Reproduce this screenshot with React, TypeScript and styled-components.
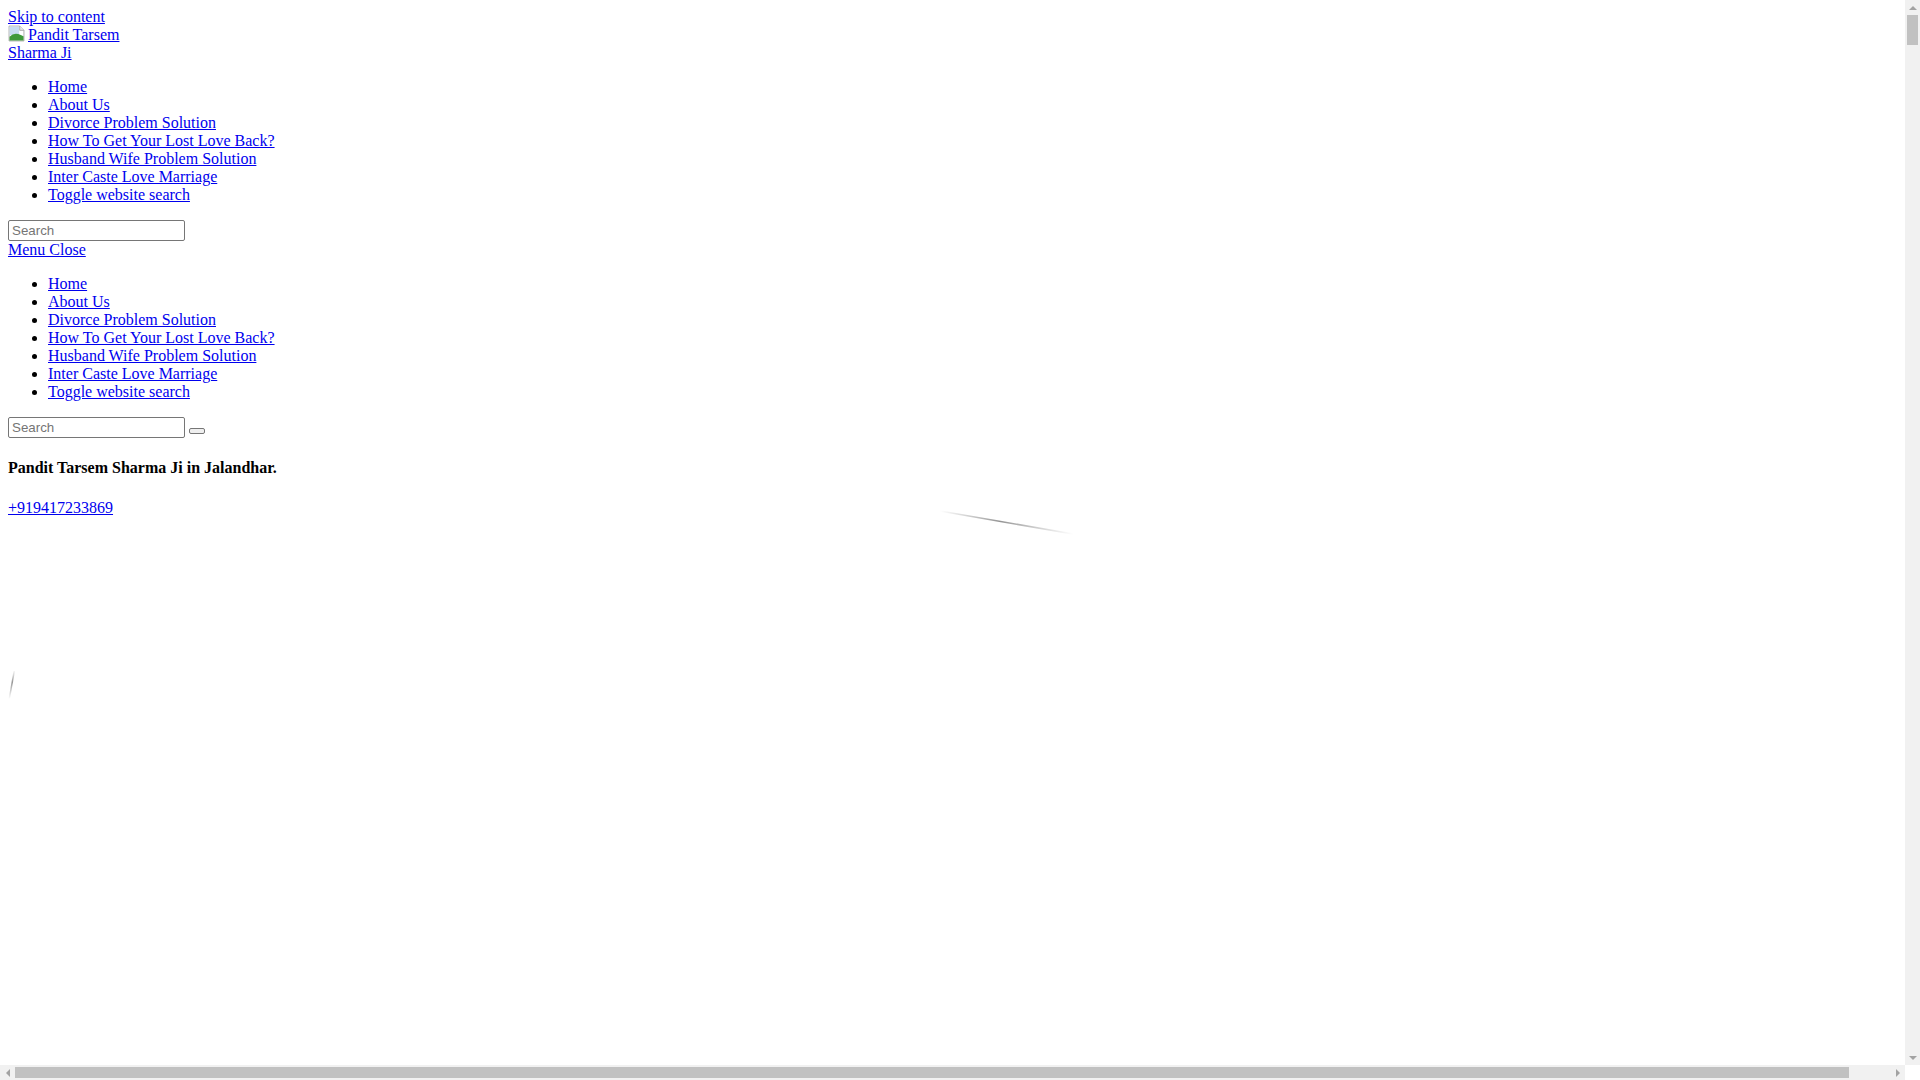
import React from "react";
import styled, { createGlobalStyle } from "styled-components";

const GlobalStyle = createGlobalStyle`
  html, body {
    overflow: hidden;
  }
  body {
    margin: 8px;
    font-family: "Liberation Serif", "Times New Roman", serif;
    font-size: 16px;
    color: #000;
    background: #fff;
  }
  a {
    color: #0000ee;
  }
`;

const LogoLink = styled.a`
  display: inline-block;
  width: 112px;
`;

const BrokenIcon = styled.svg`
  width: 17px;
  height: 17px;
  margin: -4px 3px 0 0;
  vertical-align: -2px;
`;

const NavList = styled.ul`
  margin: 16px 0;
  padding-left: 40px;
  list-style: disc;
`;

const SearchForm = styled.form`
  margin: 0;
`;

const SearchInput = styled.input`
  box-sizing: border-box;
  width: 177px;
  height: 21px;
  padding: 1px 3px;
  border: 1px solid #767676;
  border-radius: 2px;
  font-family: "Liberation Sans", Arial, sans-serif;
  font-size: 13.33px;
  &::placeholder {
    color: #757575;
  }
`;

const SearchButton = styled.button`
  box-sizing: border-box;
  width: 16px;
  height: 6px;
  margin-left: 4px;
  padding: 0;
  border: 1px solid #767676;
  border-radius: 2px;
  background: #efefef;
  vertical-align: -1px;
`;

const SiteTitle = styled.h4`
  font-size: 16px;
  font-weight: bold;
  margin: 21px 0 22px;
`;

const Decor = styled.svg`
  display: block;
  width: 1880px;
  height: 540px;
  overflow: visible;
`;

// fake browser scrollbars, drawn over the page
const VScroll = styled.div`
  position: fixed;
  top: 0;
  right: 0;
  width: 15px;
  height: 1065px;
  background: #f1f1f1;
  display: flex;
  flex-direction: column;
  align-items: center;
`;

const HScroll = styled.div`
  position: fixed;
  left: 0;
  bottom: 0;
  width: 1905px;
  height: 15px;
  background: #f1f1f1;
  display: flex;
  align-items: center;
`;

const Corner = styled.div`
  position: fixed;
  right: 0;
  bottom: 0;
  width: 15px;
  height: 15px;
  background: #fff;
`;

const ArrowBox = styled.div`
  flex: none;
  width: 15px;
  height: 15px;
  display: flex;
  align-items: center;
  justify-content: center;
`;

const Arrow = styled.span<{ $dir: "up" | "down" | "left" | "right" }>`
  width: 0;
  height: 0;
  border: 4px solid transparent;
  ${(p) =>
    p.$dir === "up"
      ? "border-bottom-color: #a3a3a3; border-top-width: 0;"
      : p.$dir === "down"
      ? "border-top-color: #a3a3a3; border-bottom-width: 0;"
      : p.$dir === "left"
      ? "border-right-color: #a3a3a3; border-left-width: 0;"
      : "border-left-color: #a3a3a3; border-right-width: 0;"}
`;

const Track = styled.div<{ $vertical?: boolean }>`
  flex: 1;
  display: flex;
  flex-direction: ${(p) => (p.$vertical ? "column" : "row")};
  align-items: center;
  align-self: stretch;
`;

const Thumb = styled.div<{ $vertical?: boolean }>`
  background: #c1c1c1;
  ${(p) =>
    p.$vertical
      ? "width: 11px; height: 30px;"
      : "height: 11px; width: 1834px;"}
`;

const menuItems = [
  "Home",
  "About Us",
  "Divorce Problem Solution",
  "How To Get Your Lost Love Back?",
  "Husband Wife Problem Solution",
  "Inter Caste Love Marriage",
  "Toggle website search",
];

function Menu() {
  return (
    <NavList>
      {menuItems.map((item) => (
        <li key={item}>
          <a href="#">{item}</a>
        </li>
      ))}
    </NavList>
  );
}

export default function App() {
  return (
    <>
      <GlobalStyle />
      <a href="#">Skip to content</a>
      <div>
        <LogoLink href="#">
          <BrokenIcon viewBox="0 0 16 16">
            <path d="M1 1h10l4 4v10H1z" fill="#fff" stroke="#a0a0a0" strokeWidth="0.8" />
            <path d="M11 1v4h4" fill="#e8e8e8" stroke="#a0a0a0" strokeWidth="0.8" />
            <rect x="1.5" y="1.5" width="9" height="8" fill="#c6dcf0" />
            <path d="M1.4 14.6 L1.4 11 Q6 6.5 12 9.5 L14.6 10.5 L14.6 14.6 Z" fill="#3f9a3a" />
          </BrokenIcon>
          Pandit Tarsem Sharma Ji
        </LogoLink>
      </div>
      <Menu />
      <SearchForm>
        <SearchInput type="search" placeholder="Search" />
      </SearchForm>
      <a href="#">Menu Close</a>
      <Menu />
      <SearchForm>
        <SearchInput type="search" placeholder="Search" />
        <SearchButton type="submit" />
      </SearchForm>
      <SiteTitle>Pandit Tarsem Sharma Ji in Jalandhar.</SiteTitle>
      <div>
        <a href="#">+919417233869</a>
      </div>
      <Decor viewBox="0 0 1880 540">
        <defs>
          <linearGradient id="fadeA" x1="0" y1="0" x2="1" y2="0">
            <stop offset="0" stopColor="#999" stopOpacity="0" />
            <stop offset="0.45" stopColor="#888" stopOpacity="0.9" />
            <stop offset="1" stopColor="#999" stopOpacity="0" />
          </linearGradient>
          <linearGradient id="fadeB" x1="0" y1="0" x2="0" y2="1">
            <stop offset="0" stopColor="#999" stopOpacity="0.1" />
            <stop offset="0.4" stopColor="#888" stopOpacity="0.9" />
            <stop offset="1" stopColor="#999" stopOpacity="0" />
          </linearGradient>
        </defs>
        <line x1="932" y1="-6" x2="1065" y2="17" stroke="url(#fadeA)" strokeWidth="1.6" />
        <polygon points="5.5,154 7,154 2,182 0.5,182" fill="url(#fadeB)" />
      </Decor>

      <VScroll>
        <ArrowBox>
          <Arrow $dir="up" />
        </ArrowBox>
        <Track $vertical>
          <Thumb $vertical />
        </Track>
        <ArrowBox>
          <Arrow $dir="down" />
        </ArrowBox>
      </VScroll>
      <HScroll>
        <ArrowBox>
          <Arrow $dir="left" />
        </ArrowBox>
        <Track>
          <Thumb />
        </Track>
        <ArrowBox>
          <Arrow $dir="right" />
        </ArrowBox>
      </HScroll>
      <Corner />
    </>
  );
}
